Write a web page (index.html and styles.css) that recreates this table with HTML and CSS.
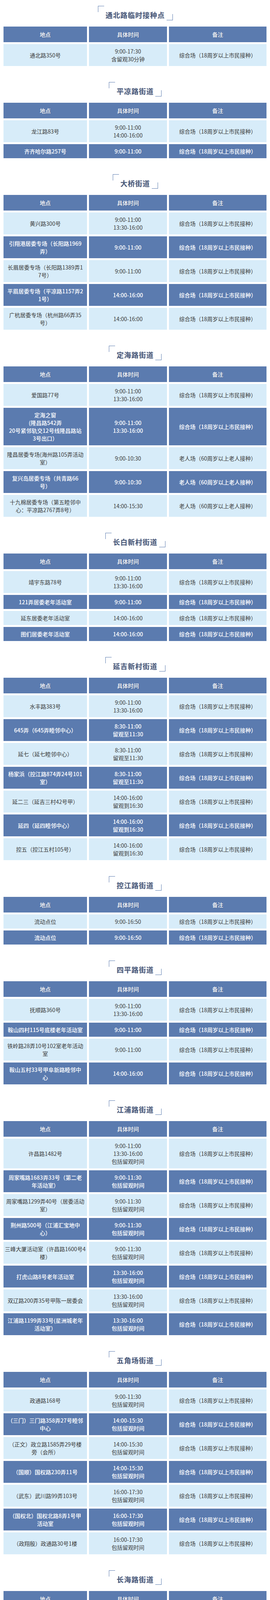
FILE: index.html
```html
<!DOCTYPE html>
<html lang="zh-CN">
<head>
<meta charset="utf-8">
<title>杨浦区新冠疫苗临时接种点</title>
<link rel="stylesheet" href="styles.css">
</head>
<body>
<main class="page">

<section class="sec">
  <div class="head"><h2 class="title">通北路临时接种点</h2></div>
  <div class="tbl">
    <div class="row hd"><div class="c"><span>地点</span></div><div class="c"><span>具体时间</span></div><div class="c"><span>备注</span></div></div>
    <div class="row"><div class="c"><span>通北路350号</span></div><div class="c"><span>9:00-17:30<br>含留观30分钟</span></div><div class="c"><span>综合场（18周岁以上市民接种）</span></div></div>
  </div>
</section>

<section class="sec">
  <div class="head"><h2 class="title">平凉路街道</h2></div>
  <div class="tbl">
    <div class="row hd"><div class="c"><span>地点</span></div><div class="c"><span>具体时间</span></div><div class="c"><span>备注</span></div></div>
    <div class="row"><div class="c"><span>龙江路83号</span></div><div class="c"><span>9:00-11:00<br>14:00-16:00</span></div><div class="c"><span>综合场（18周岁以上市民接种）</span></div></div>
    <div class="row"><div class="c"><span>齐齐哈尔路257号</span></div><div class="c"><span>9:00-11:00</span></div><div class="c"><span>综合场（18周岁以上市民接种）</span></div></div>
  </div>
</section>

<section class="sec">
  <div class="head"><h2 class="title">大桥街道</h2></div>
  <div class="tbl">
    <div class="row hd"><div class="c"><span>地点</span></div><div class="c"><span>具体时间</span></div><div class="c"><span>备注</span></div></div>
    <div class="row"><div class="c"><span>黄兴路300号</span></div><div class="c"><span>9:00-11:00<br>13:30-16:00</span></div><div class="c"><span>综合场（18周岁以上市民接种）</span></div></div>
    <div class="row"><div class="c"><span>引翔港居委专场（长阳路1969<br>弄）</span></div><div class="c"><span>9:00-11:00</span></div><div class="c"><span>综合场（18周岁以上市民接种）</span></div></div>
    <div class="row"><div class="c"><span>长眉居委专场（长阳路1389弄1<br>7号）</span></div><div class="c"><span>9:00-11:00</span></div><div class="c"><span>综合场（18周岁以上市民接种）</span></div></div>
    <div class="row"><div class="c"><span>平眉居委专场（平凉路1157弄2<br>1号）</span></div><div class="c"><span>14:00-16:00</span></div><div class="c"><span>综合场（18周岁以上市民接种）</span></div></div>
    <div class="row"><div class="c"><span>广杭居委专场（杭州路66弄35<br>号）</span></div><div class="c"><span>14:00-16:00</span></div><div class="c"><span>综合场（18周岁以上市民接种）</span></div></div>
  </div>
</section>

<section class="sec">
  <div class="head"><h2 class="title">定海路街道</h2></div>
  <div class="tbl">
    <div class="row hd"><div class="c"><span>地点</span></div><div class="c"><span>具体时间</span></div><div class="c"><span>备注</span></div></div>
    <div class="row"><div class="c"><span>爱国路77号</span></div><div class="c"><span>9:00-11:00<br>13:30-16:00</span></div><div class="c"><span>综合场（18周岁以上市民接种）</span></div></div>
    <div class="row"><div class="c"><span>定海之窗<br>(隆昌路542弄<br>20号紧邻轨交12号线隆昌路站<br>3号出口）</span></div><div class="c"><span>9:00-11:00<br>13:30-16:00</span></div><div class="c"><span>综合场（18周岁以上市民接种）</span></div></div>
    <div class="row"><div class="c"><span>隆昌居委专场(海州路105弄活动<br>室）</span></div><div class="c"><span>9:00-10:30</span></div><div class="c"><span>老人场（60周岁以上老人接种）</span></div></div>
    <div class="row"><div class="c"><span>复兴岛居委专场（共青路66<br>号）</span></div><div class="c"><span>9:00-10:30</span></div><div class="c"><span>老人场（60周岁以上老人接种）</span></div></div>
    <div class="row"><div class="c"><span>十九棉居委专场（第五睦邻中<br>心：平凉路2767弄8号）</span></div><div class="c"><span>14:00-15:30</span></div><div class="c"><span>老人场（60周岁以上老人接种）</span></div></div>
  </div>
</section>

<section class="sec">
  <div class="head"><h2 class="title">长白新村街道</h2></div>
  <div class="tbl">
    <div class="row hd"><div class="c"><span>地点</span></div><div class="c"><span>具体时间</span></div><div class="c"><span>备注</span></div></div>
    <div class="row"><div class="c"><span>靖宇东路78号</span></div><div class="c"><span>9:00-11:00<br>13:30-16:00</span></div><div class="c"><span>综合场（18周岁以上市民接种）</span></div></div>
    <div class="row"><div class="c"><span>121弄居委老年活动室</span></div><div class="c"><span>9:00-11:00</span></div><div class="c"><span>综合场（18周岁以上市民接种）</span></div></div>
    <div class="row"><div class="c"><span>延东居委老年活动室</span></div><div class="c"><span>14:00-16:00</span></div><div class="c"><span>综合场（18周岁以上市民接种）</span></div></div>
    <div class="row"><div class="c"><span>图们居委老年活动室</span></div><div class="c"><span>14:00-16:00</span></div><div class="c"><span>综合场（18周岁以上市民接种）</span></div></div>
  </div>
</section>

<section class="sec">
  <div class="head"><h2 class="title">延吉新村街道</h2></div>
  <div class="tbl">
    <div class="row hd"><div class="c"><span>地点</span></div><div class="c"><span>具体时间</span></div><div class="c"><span>备注</span></div></div>
    <div class="row"><div class="c"><span>水丰路383号</span></div><div class="c"><span>9:00-11:00<br>13:30-16:00</span></div><div class="c"><span>综合场（18周岁以上市民接种）</span></div></div>
    <div class="row"><div class="c"><span>645弄（645弄睦邻中心）</span></div><div class="c"><span>8:30-11:00<br>留观至11:30</span></div><div class="c"><span>综合场（18周岁以上市民接种）</span></div></div>
    <div class="row"><div class="c"><span>延七（延七睦邻中心）</span></div><div class="c"><span>8:30-11:00<br>留观至11:30</span></div><div class="c"><span>综合场（18周岁以上市民接种）</span></div></div>
    <div class="row"><div class="c"><span>杨家浜（控江路874弄24号101<br>室）</span></div><div class="c"><span>8:30-11:00<br>留观至11:30</span></div><div class="c"><span>综合场（18周岁以上市民接种）</span></div></div>
    <div class="row"><div class="c"><span>延二三（延吉三村42号甲）</span></div><div class="c"><span>14:00-16:00<br>留观到16:30</span></div><div class="c"><span>综合场（18周岁以上市民接种）</span></div></div>
    <div class="row"><div class="c"><span>延四（延四睦邻中心）</span></div><div class="c"><span>14:00-16:00<br>留观到16:30</span></div><div class="c"><span>综合场（18周岁以上市民接种）</span></div></div>
    <div class="row"><div class="c"><span>控五（控江五村105号）</span></div><div class="c"><span>14:00-16:00<br>留观到16:30</span></div><div class="c"><span>综合场（18周岁以上市民接种）</span></div></div>
  </div>
</section>

<section class="sec">
  <div class="head"><h2 class="title">控江路街道</h2></div>
  <div class="tbl">
    <div class="row hd"><div class="c"><span>地点</span></div><div class="c"><span>具体时间</span></div><div class="c"><span>备注</span></div></div>
    <div class="row"><div class="c"><span>流动点位</span></div><div class="c"><span>9:00-16:50</span></div><div class="c"><span>综合场（18周岁以上市民接种）</span></div></div>
    <div class="row"><div class="c"><span>流动点位</span></div><div class="c"><span>9:00-16:50</span></div><div class="c"><span>综合场（18周岁以上市民接种）</span></div></div>
  </div>
</section>

<section class="sec">
  <div class="head"><h2 class="title">四平路街道</h2></div>
  <div class="tbl">
    <div class="row hd"><div class="c"><span>地点</span></div><div class="c"><span>具体时间</span></div><div class="c"><span>备注</span></div></div>
    <div class="row"><div class="c"><span>抚顺路360号</span></div><div class="c"><span>9:00-11:00<br>13:30-16:00</span></div><div class="c"><span>综合场（18周岁以上市民接种）</span></div></div>
    <div class="row"><div class="c"><span>鞍山四村115号底楼老年活动室</span></div><div class="c"><span>9:00-11:00</span></div><div class="c"><span>综合场（18周岁以上市民接种）</span></div></div>
    <div class="row"><div class="c"><span>铁岭路28弄10号102室老年活动<br>室</span></div><div class="c"><span>9:00-11:00</span></div><div class="c"><span>综合场（18周岁以上市民接种）</span></div></div>
    <div class="row"><div class="c"><span>鞍山五村33号甲阜新路睦邻中<br>心</span></div><div class="c"><span>14:00-16:00</span></div><div class="c"><span>综合场（18周岁以上市民接种）</span></div></div>
  </div>
</section>

<section class="sec">
  <div class="head"><h2 class="title">江浦路街道</h2></div>
  <div class="tbl">
    <div class="row hd"><div class="c"><span>地点</span></div><div class="c"><span>具体时间</span></div><div class="c"><span>备注</span></div></div>
    <div class="row"><div class="c"><span>许昌路1482号</span></div><div class="c"><span>9:00-11:00<br>13:30-16:00<br>包括留观时间</span></div><div class="c"><span>综合场（18周岁以上市民接种）</span></div></div>
    <div class="row"><div class="c"><span>周家嘴路1683弄33号（第二老<br>年活动室）</span></div><div class="c"><span>9:00-11:30<br>包括留观时间</span></div><div class="c"><span>综合场（18周岁以上市民接种）</span></div></div>
    <div class="row"><div class="c"><span>周家嘴路1299弄40号（居委活动<br>室）</span></div><div class="c"><span>9:00-11:30<br>包括留观时间</span></div><div class="c"><span>综合场（18周岁以上市民接种）</span></div></div>
    <div class="row"><div class="c"><span>荆州路500号（江浦汇宝地中<br>心）</span></div><div class="c"><span>9:00-11:30<br>包括留观时间</span></div><div class="c"><span>综合场（18周岁以上市民接种）</span></div></div>
    <div class="row"><div class="c"><span>三峰大厦活动室（许昌路1600号4<br>楼）</span></div><div class="c"><span>9:00-11:30<br>包括留观时间</span></div><div class="c"><span>综合场（18周岁以上市民接种）</span></div></div>
    <div class="row"><div class="c"><span>打虎山路8号老年活动室</span></div><div class="c"><span>13:30-16:00<br>包括留观时间</span></div><div class="c"><span>综合场（18周岁以上市民接种）</span></div></div>
    <div class="row"><div class="c"><span>双辽路200弄35号甲陈一居委会</span></div><div class="c"><span>13:30-16:00<br>包括留观时间</span></div><div class="c"><span>综合场（18周岁以上市民接种）</span></div></div>
    <div class="row"><div class="c"><span>江浦路1199弄33号(星洲城老年<br>活动室）</span></div><div class="c"><span>13:30-16:00<br>包括留观时间</span></div><div class="c"><span>综合场（18周岁以上市民接种）</span></div></div>
  </div>
</section>

<section class="sec">
  <div class="head"><h2 class="title">五角场街道</h2></div>
  <div class="tbl">
    <div class="row hd"><div class="c"><span>地点</span></div><div class="c"><span>具体时间</span></div><div class="c"><span>备注</span></div></div>
    <div class="row"><div class="c"><span>政通路168号</span></div><div class="c"><span>9:00-11:30<br>包括留观时间</span></div><div class="c"><span>综合场（18周岁以上市民接种）</span></div></div>
    <div class="row"><div class="c"><span>（三门）三门路358弄27号睦邻<br>中心</span></div><div class="c"><span>14:00-15:30<br>包括留观时间</span></div><div class="c"><span>综合场（18周岁以上市民接种）</span></div></div>
    <div class="row"><div class="c"><span>（正文）政立路1585弄29号楼<br>旁（会所）</span></div><div class="c"><span>14:00-15:30<br>包括留观时间</span></div><div class="c"><span>综合场（18周岁以上市民接种）</span></div></div>
    <div class="row"><div class="c"><span>（国顺）国权路230弄11号</span></div><div class="c"><span>14:00-15:30<br>包括留观时间</span></div><div class="c"><span>综合场（18周岁以上市民接种）</span></div></div>
    <div class="row"><div class="c"><span>（武东）武川路99弄103号</span></div><div class="c"><span>16:00-17:30<br>包括留观时间</span></div><div class="c"><span>综合场（18周岁以上市民接种）</span></div></div>
    <div class="row"><div class="c"><span>（国权北）国权北路8弄1号甲<br>活动室</span></div><div class="c"><span>16:00-17:30<br>包括留观时间</span></div><div class="c"><span>综合场（18周岁以上市民接种）</span></div></div>
    <div class="row"><div class="c"><span>（政翔殷）政通路30号1楼</span></div><div class="c"><span>16:00-17:30<br>包括留观时间</span></div><div class="c"><span>综合场（18周岁以上市民接种）</span></div></div>
  </div>
</section>

<section class="sec">
  <div class="head"><h2 class="title">长海路街道</h2></div>
  <div class="tbl">
    <div class="row hd"><div class="c"><span>地点</span></div><div class="c"><span>具体时间</span></div><div class="c"><span>备注</span></div></div>
    <div class="row"><div class="c"><span>营口路760号</span></div><div class="c"><span>9:00-11:00<br>13:30-16:00</span></div><div class="c"><span>综合场（18周岁以上市民接种）</span></div></div>
    <div class="row"><div class="c"><span>佳木斯路110弄8号甲</span></div><div class="c"><span>9:00-11:00<br>留观到11:30</span></div><div class="c"><span>综合场（18周岁以上市民接种）</span></div></div>
    <div class="row"><div class="c"><span>民京路823号甲</span></div><div class="c"><span>9:00-11:00<br>留观到11:30</span></div><div class="c"><span>综合场（18周岁以上市民接种）</span></div></div>
    <div class="row"><div class="c"><span>国顺东路浣纱三村25号</span></div><div class="c"><span>9:00-11:00<br>留观到11:30</span></div><div class="c"><span>综合场（18周岁以上市民接种）</span></div></div>
    <div class="row"><div class="c"><span>翔殷路791弄3号楼底</span></div><div class="c"><span>9:00-11:00<br>留观到11:30</span></div><div class="c"><span>综合场（18周岁以上市民接种）</span></div></div>
    <div class="row"><div class="c"><span>国和路888弄1号</span></div><div class="c"><span>13:30-16:00<br>留观到16:30</span></div><div class="c"><span>综合场（18周岁以上市民接种）</span></div></div>
    <div class="row"><div class="c"><span>翔殷路871弄4号</span></div><div class="c"><span>13:30-16:00<br>留观到16:30</span></div><div class="c"><span>综合场（18周岁以上市民接种）</span></div></div>
    <div class="row"><div class="c"><span>中原路32弄8号对面活动室</span></div><div class="c"><span>13:30-16:00<br>留观到16:30</span></div><div class="c"><span>综合场（18周岁以上市民接种）</span></div></div>
    <div class="row"><div class="c"><span>长海二村68号甲</span></div><div class="c"><span>13:30-16:00<br>留观到16:30</span></div><div class="c"><span>综合场（18周岁以上市民接种）</span></div></div>
  </div>
</section>

<section class="sec">
  <div class="head"><h2 class="title">殷行街道</h2></div>
  <div class="tbl">
    <div class="row hd"><div class="c"><span>地点</span></div><div class="c"><span>具体时间</span></div><div class="c"><span>备注</span></div></div>
    <div class="row"><div class="c"><span>990弄居委老年活动室</span></div><div class="c"><span>9:00-11:00<br>留观到11:30</span></div><div class="c"><span>综合场（18周岁以上市民接种）</span></div></div>
    <div class="row"><div class="c"><span>阳光之家29号</span></div><div class="c"><span>9:00-11:00<br>留观到11:30</span></div><div class="c"><span>综合场（18周岁以上市民接种）</span></div></div>
    <div class="row"><div class="c"><span>市光一村3号103室</span></div><div class="c"><span>9:00-11:00<br>留观到11:30</span></div><div class="c"><span>综合场（18周岁以上市民接种）</span></div></div>
    <div class="row"><div class="c"><span>包头路498号</span></div><div class="c"><span>9:00-11:00<br>留观到11:30</span></div><div class="c"><span>综合场（18周岁以上市民接种）</span></div></div>
    <div class="row"><div class="c"><span>开鲁二村12号104-105室</span></div><div class="c"><span>14:00-16:00<br>留观到16:30</span></div><div class="c"><span>综合场（18周岁以上市民接种）</span></div></div>
    <div class="row"><div class="c"><span>市光二村108号201室居委</span></div><div class="c"><span>14:00-16:00<br>留观到16:30</span></div><div class="c"><span>综合场（18周岁以上市民接种）</span></div></div>
    <div class="row"><div class="c"><span>中原路710弄道口老年活动室</span></div><div class="c"><span>14:00-16:00<br>留观到16:30</span></div><div class="c"><span>综合场（18周岁以上市民接种）</span></div></div>
  </div>
</section>

<section class="sec">
  <div class="head"><h2 class="title">新江湾城街道</h2></div>
  <div class="tbl">
    <div class="row hd"><div class="c"><span>地点</span></div><div class="c"><span>具体时间</span></div><div class="c"><span>备注</span></div></div>
    <div class="row"><div class="c"><span>星汇广场（国安路758弄22号）</span></div><div class="c"><span>9:00-11:00<br>留观到11:30<br>13:30-16:00<br>留观到16:30</span></div><div class="c"><span>综合场（18周岁以上市民接种）</span></div></div>
    <div class="row"><div class="c"><span>加州（淞沪路1888弄3号1楼）</span></div><div class="c"><span>14:00-16:00<br>留观到16:30</span></div><div class="c"><span>综合场（18周岁以上市民接种）</span></div></div>
    <div class="row"><div class="c"><span>中建（国秀路181弄物业楼30<br>1）</span></div><div class="c"><span>14:00-16:00<br>留观到16:30</span></div><div class="c"><span>综合场（18周岁以上市民接种）</span></div></div>
    <div class="row"><div class="c"><span>时代（殷行路850弄53号2楼）</span></div><div class="c"><span>9:00-11:00<br>留观到11:30</span></div><div class="c"><span>综合场（18周岁以上市民接种）</span></div></div>
    <div class="row"><div class="c"><span>国安二（国安路518号2楼</span></div><div class="c"><span>18:30-20:00<br>留观到20:30</span></div><div class="c"><span>综合场（18周岁以上市民接种）</span></div></div>
    <div class="row"><div class="c"><span>雍景苑（政悦路500弄2号2楼）</span></div><div class="c"><span>9:00-11:00<br>留观到11:30</span></div><div class="c"><span>综合场（18周岁以上市民接种）</span></div></div>
    <div class="row"><div class="c"><span>政立二（政云路220号2楼）</span></div><div class="c"><span>18:00-20:00<br>留观到20:30</span></div><div class="c"><span>综合场（18周岁以上市民接种）</span></div></div>
  </div>
</section>

</main>
</body>
</html>
```

FILE: styles.css
```css
html, body {
  margin: 0;
  padding: 0;
  background: #ffffff;
}

body {
  font-family: "Noto Sans CJK SC", "Noto Sans", "Liberation Sans", sans-serif;
  color: #333333;
}

.page {
  width: 692px;
  box-sizing: border-box;
  padding: 15px 8px 0 9px;
}

.sec + .sec {
  margin-top: 41px;
}

.head {
  display: flex;
  justify-content: center;
  margin-bottom: 16px;
}

.title {
  position: relative;
  margin: 0;
  padding: 11px 20px 2px 20px;
  font-size: 18px;
  line-height: 24px;
  letter-spacing: 1px;
  font-weight: 700;
  color: #4b5a7b;
  text-shadow: 0 0 1px rgba(75, 90, 123, 0.35);
}

.title::before,
.title::after {
  content: "";
  position: absolute;
  width: 15px;
  height: 15px;
  border-color: #5b7baf;
  border-style: solid;
  border-width: 0;
}

.title::before {
  left: 0;
  top: 0;
  border-top-width: 1px;
  border-left-width: 1px;
}

.title::after {
  right: 0;
  bottom: 0;
  border-bottom-width: 1px;
  border-right-width: 1px;
}

.tbl {
  display: flex;
  flex-direction: column;
  gap: 5px;
}

.row {
  display: grid;
  grid-template-columns: 214px 200px 250px;
  column-gap: 5px;
}

.c {
  display: flex;
  align-items: center;
  justify-content: center;
  text-align: center;
  padding: 8px 2px;
  font-size: 14px;
  line-height: 20px;
  white-space: nowrap;
}

.row:nth-child(odd) .c {
  background: #5b7baf;
  color: #ffffff;
  font-weight: 500;
}

.row:nth-child(even) .c {
  background: #d7ecf9;
  color: #3a3a3a;
}

.hd .c {
  padding-top: 10px;
  padding-bottom: 10px;
  font-weight: 700;
  text-shadow: 1px 1px 1px rgba(40, 55, 90, 0.35);
}
```
